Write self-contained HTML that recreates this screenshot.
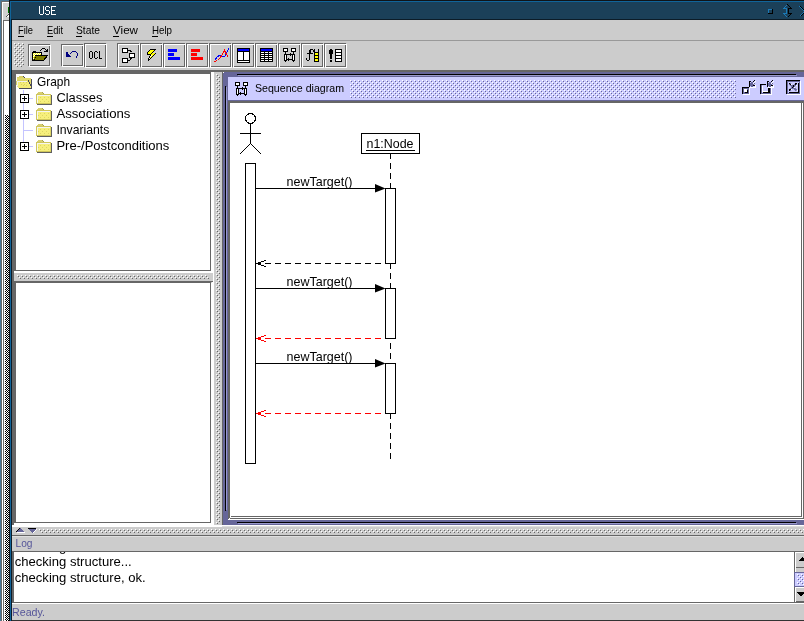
<!DOCTYPE html><html><head><meta charset="utf-8"><style>html,body{margin:0;padding:0;overflow:hidden;background:#4a7898}svg{display:block;will-change:transform}text{font-family:"Liberation Sans",sans-serif}</style></head><body><svg width="804" height="621" viewBox="0 0 804 621" shape-rendering="crispEdges"><defs>
<pattern id="chk" x="0" y="0" width="2" height="2" patternUnits="userSpaceOnUse">
<rect width="2" height="2" fill="#fff"/><rect width="1" height="1" fill="#000"/><rect x="1" y="1" width="1" height="1" fill="#000"/></pattern>
<pattern id="bump" x="0" y="0" width="4" height="4" patternUnits="userSpaceOnUse">
<rect x="0" y="0" width="1" height="1" fill="#fff"/><rect x="2" y="2" width="1" height="1" fill="#fff"/>
<rect x="1" y="1" width="1" height="1" fill="#666666"/><rect x="3" y="3" width="1" height="1" fill="#666666"/></pattern>
<pattern id="bumpP" x="2" y="0" width="4" height="4" patternUnits="userSpaceOnUse">
<rect x="0" y="0" width="1" height="1" fill="#fff"/><rect x="2" y="2" width="1" height="1" fill="#fff"/>
<rect x="1" y="1" width="1" height="1" fill="#666699"/><rect x="3" y="3" width="1" height="1" fill="#666699"/></pattern>
</defs><defs><pattern id="bp0" x="14" y="43" width="4" height="4" patternUnits="userSpaceOnUse"><rect x="0" y="0" width="1" height="1" fill="#ffffff"/><rect x="2" y="2" width="1" height="1" fill="#ffffff"/><rect x="1" y="1" width="1" height="1" fill="#666666"/><rect x="3" y="3" width="1" height="1" fill="#666666"/></pattern><pattern id="bp1" x="17" y="275" width="4" height="4" patternUnits="userSpaceOnUse"><rect x="0" y="0" width="1" height="1" fill="#ffffff"/><rect x="2" y="2" width="1" height="1" fill="#ffffff"/><rect x="1" y="1" width="1" height="1" fill="#666666"/><rect x="3" y="3" width="1" height="1" fill="#666666"/></pattern><pattern id="bp2" x="216" y="74" width="4" height="4" patternUnits="userSpaceOnUse"><rect x="0" y="0" width="1" height="1" fill="#ffffff"/><rect x="2" y="2" width="1" height="1" fill="#ffffff"/><rect x="1" y="1" width="1" height="1" fill="#666666"/><rect x="3" y="3" width="1" height="1" fill="#666666"/></pattern><pattern id="bp3" x="350" y="80" width="4" height="4" patternUnits="userSpaceOnUse"><rect x="0" y="0" width="1" height="1" fill="#ffffff"/><rect x="2" y="2" width="1" height="1" fill="#ffffff"/><rect x="1" y="1" width="1" height="1" fill="#666699"/><rect x="3" y="3" width="1" height="1" fill="#666699"/></pattern><pattern id="bp4" x="39" y="529" width="4" height="4" patternUnits="userSpaceOnUse"><rect x="0" y="0" width="1" height="1" fill="#ffffff"/><rect x="2" y="2" width="1" height="1" fill="#ffffff"/><rect x="1" y="1" width="1" height="1" fill="#666666"/><rect x="3" y="3" width="1" height="1" fill="#666666"/></pattern><pattern id="bp5" x="797" y="574" width="4" height="4" patternUnits="userSpaceOnUse"><rect x="0" y="0" width="1" height="1" fill="#ffffff"/><rect x="2" y="2" width="1" height="1" fill="#ffffff"/><rect x="1" y="1" width="1" height="1" fill="#666699"/><rect x="3" y="3" width="1" height="1" fill="#666699"/></pattern></defs>
<rect x="0" y="0" width="804" height="621" fill="#4a7898"/>
<rect x="1" y="1" width="1" height="620" fill="#6a6a6a"/>
<rect x="1" y="1" width="9" height="1" fill="#6a6a6a"/>
<rect x="2" y="2" width="1" height="619" fill="#ffffff"/>
<rect x="2" y="2" width="8" height="1" fill="#ffffff"/>
<rect x="3" y="3" width="6" height="17" fill="#d0d0d0"/>
<rect x="8" y="7" width="1" height="6" fill="#007000"/>
<rect x="3" y="20" width="6" height="1" fill="#6a6a6a"/>
<rect x="3" y="20" width="1" height="601" fill="#6a6a6a"/>
<rect x="4" y="21" width="5" height="600" fill="#ffffff"/>
<rect x="6" y="16" width="1" height="1" fill="#505050"/>
<rect x="7" y="15" width="1" height="1" fill="#505050"/>
<rect x="8" y="14" width="1" height="1" fill="#505050"/>
<rect x="7" y="16" width="1" height="1" fill="#ffffff"/>
<rect x="8" y="15" width="1" height="1" fill="#ffffff"/>
<rect x="8" y="16" width="1" height="1" fill="#ffffff"/>
<rect x="5" y="115" width="4" height="506" fill="url(#chk)"/>
<rect x="9" y="0" width="1" height="621" fill="#101418"/>
<rect x="9" y="0" width="796" height="1" fill="#101418"/>
<rect x="10" y="1" width="1" height="620" fill="#10649a"/>
<rect x="10" y="1" width="795" height="1" fill="#10649a"/>
<rect x="11" y="2" width="793" height="17" fill="#1b4059"/>
<rect x="11" y="19" width="794" height="1" fill="#0c1c28"/>
<rect x="11" y="20" width="1" height="601" fill="#0c1c28"/>
<rect x="12" y="20" width="792" height="601" fill="#cccccc"/>
<rect x="39" y="6" width="1" height="8" fill="#ffffff"/>
<rect x="43" y="6" width="1" height="8" fill="#ffffff"/>
<rect x="40" y="14" width="3" height="1" fill="#ffffff"/>
<rect x="46" y="6" width="3" height="1" fill="#ffffff"/>
<rect x="49" y="7" width="1" height="1" fill="#ffffff"/>
<rect x="45" y="7" width="1" height="3" fill="#ffffff"/>
<rect x="46" y="10" width="3" height="1" fill="#ffffff"/>
<rect x="49" y="11" width="1" height="3" fill="#ffffff"/>
<rect x="46" y="14" width="3" height="1" fill="#ffffff"/>
<rect x="45" y="13" width="1" height="1" fill="#ffffff"/>
<rect x="51" y="6" width="1" height="9" fill="#ffffff"/>
<rect x="52" y="6" width="4" height="1" fill="#ffffff"/>
<rect x="52" y="10" width="3" height="1" fill="#ffffff"/>
<rect x="52" y="14" width="4" height="1" fill="#ffffff"/>
<rect x="12" y="40" width="793" height="1" fill="#999999"/>
<text x="18" y="34" font-size="11" fill="#000" textLength="15" lengthAdjust="spacingAndGlyphs">File</text>
<rect x="18" y="36" width="6" height="1" fill="#000"/>
<text x="47" y="34" font-size="11" fill="#000" textLength="16" lengthAdjust="spacingAndGlyphs">Edit</text>
<rect x="47" y="36" width="6" height="1" fill="#000"/>
<text x="76" y="34" font-size="11" fill="#000" textLength="24" lengthAdjust="spacingAndGlyphs">State</text>
<rect x="76" y="36" width="6" height="1" fill="#000"/>
<text x="113" y="34" font-size="11" fill="#000" textLength="25" lengthAdjust="spacingAndGlyphs">View</text>
<rect x="113" y="36" width="6" height="1" fill="#000"/>
<text x="152" y="34" font-size="11" fill="#000" textLength="20" lengthAdjust="spacingAndGlyphs">Help</text>
<rect x="152" y="36" width="6" height="1" fill="#000"/>
<rect x="14" y="43" width="10" height="24" fill="url(#bp0)"/>
<rect x="28" y="44" width="22" height="1" fill="#666666"/>
<rect x="28" y="44" width="1" height="22" fill="#666666"/>
<rect x="28" y="65" width="22" height="1" fill="#666666"/>
<rect x="49" y="44" width="1" height="22" fill="#666666"/>
<rect x="29" y="45" width="22" height="1" fill="#ffffff"/>
<rect x="29" y="45" width="1" height="22" fill="#ffffff"/>
<rect x="29" y="66" width="22" height="1" fill="#ffffff"/>
<rect x="50" y="45" width="1" height="22" fill="#ffffff"/>
<rect x="61" y="44" width="22" height="1" fill="#666666"/>
<rect x="61" y="44" width="1" height="22" fill="#666666"/>
<rect x="61" y="65" width="22" height="1" fill="#666666"/>
<rect x="82" y="44" width="1" height="22" fill="#666666"/>
<rect x="62" y="45" width="22" height="1" fill="#ffffff"/>
<rect x="62" y="45" width="1" height="22" fill="#ffffff"/>
<rect x="62" y="66" width="22" height="1" fill="#ffffff"/>
<rect x="83" y="45" width="1" height="22" fill="#ffffff"/>
<rect x="84" y="43" width="22" height="1" fill="#666666"/>
<rect x="84" y="43" width="1" height="24" fill="#666666"/>
<rect x="84" y="66" width="22" height="1" fill="#666666"/>
<rect x="105" y="43" width="1" height="24" fill="#666666"/>
<rect x="85" y="44" width="22" height="1" fill="#ffffff"/>
<rect x="85" y="44" width="1" height="24" fill="#ffffff"/>
<rect x="85" y="67" width="22" height="1" fill="#ffffff"/>
<rect x="106" y="44" width="1" height="24" fill="#ffffff"/>
<rect x="117" y="43" width="22" height="1" fill="#666666"/>
<rect x="117" y="43" width="1" height="24" fill="#666666"/>
<rect x="117" y="66" width="22" height="1" fill="#666666"/>
<rect x="138" y="43" width="1" height="24" fill="#666666"/>
<rect x="118" y="44" width="22" height="1" fill="#ffffff"/>
<rect x="118" y="44" width="1" height="24" fill="#ffffff"/>
<rect x="118" y="67" width="22" height="1" fill="#ffffff"/>
<rect x="139" y="44" width="1" height="24" fill="#ffffff"/>
<rect x="140" y="43" width="22" height="1" fill="#666666"/>
<rect x="140" y="43" width="1" height="24" fill="#666666"/>
<rect x="140" y="66" width="22" height="1" fill="#666666"/>
<rect x="161" y="43" width="1" height="24" fill="#666666"/>
<rect x="141" y="44" width="22" height="1" fill="#ffffff"/>
<rect x="141" y="44" width="1" height="24" fill="#ffffff"/>
<rect x="141" y="67" width="22" height="1" fill="#ffffff"/>
<rect x="162" y="44" width="1" height="24" fill="#ffffff"/>
<rect x="163" y="43" width="22" height="1" fill="#666666"/>
<rect x="163" y="43" width="1" height="24" fill="#666666"/>
<rect x="163" y="66" width="22" height="1" fill="#666666"/>
<rect x="184" y="43" width="1" height="24" fill="#666666"/>
<rect x="164" y="44" width="22" height="1" fill="#ffffff"/>
<rect x="164" y="44" width="1" height="24" fill="#ffffff"/>
<rect x="164" y="67" width="22" height="1" fill="#ffffff"/>
<rect x="185" y="44" width="1" height="24" fill="#ffffff"/>
<rect x="186" y="43" width="22" height="1" fill="#666666"/>
<rect x="186" y="43" width="1" height="24" fill="#666666"/>
<rect x="186" y="66" width="22" height="1" fill="#666666"/>
<rect x="207" y="43" width="1" height="24" fill="#666666"/>
<rect x="187" y="44" width="22" height="1" fill="#ffffff"/>
<rect x="187" y="44" width="1" height="24" fill="#ffffff"/>
<rect x="187" y="67" width="22" height="1" fill="#ffffff"/>
<rect x="208" y="44" width="1" height="24" fill="#ffffff"/>
<rect x="209" y="43" width="22" height="1" fill="#666666"/>
<rect x="209" y="43" width="1" height="24" fill="#666666"/>
<rect x="209" y="66" width="22" height="1" fill="#666666"/>
<rect x="230" y="43" width="1" height="24" fill="#666666"/>
<rect x="210" y="44" width="22" height="1" fill="#ffffff"/>
<rect x="210" y="44" width="1" height="24" fill="#ffffff"/>
<rect x="210" y="67" width="22" height="1" fill="#ffffff"/>
<rect x="231" y="44" width="1" height="24" fill="#ffffff"/>
<rect x="232" y="43" width="22" height="1" fill="#666666"/>
<rect x="232" y="43" width="1" height="24" fill="#666666"/>
<rect x="232" y="66" width="22" height="1" fill="#666666"/>
<rect x="253" y="43" width="1" height="24" fill="#666666"/>
<rect x="233" y="44" width="22" height="1" fill="#ffffff"/>
<rect x="233" y="44" width="1" height="24" fill="#ffffff"/>
<rect x="233" y="67" width="22" height="1" fill="#ffffff"/>
<rect x="254" y="44" width="1" height="24" fill="#ffffff"/>
<rect x="255" y="43" width="22" height="1" fill="#666666"/>
<rect x="255" y="43" width="1" height="24" fill="#666666"/>
<rect x="255" y="66" width="22" height="1" fill="#666666"/>
<rect x="276" y="43" width="1" height="24" fill="#666666"/>
<rect x="256" y="44" width="22" height="1" fill="#ffffff"/>
<rect x="256" y="44" width="1" height="24" fill="#ffffff"/>
<rect x="256" y="67" width="22" height="1" fill="#ffffff"/>
<rect x="277" y="44" width="1" height="24" fill="#ffffff"/>
<rect x="278" y="43" width="22" height="1" fill="#666666"/>
<rect x="278" y="43" width="1" height="24" fill="#666666"/>
<rect x="278" y="66" width="22" height="1" fill="#666666"/>
<rect x="299" y="43" width="1" height="24" fill="#666666"/>
<rect x="279" y="44" width="22" height="1" fill="#ffffff"/>
<rect x="279" y="44" width="1" height="24" fill="#ffffff"/>
<rect x="279" y="67" width="22" height="1" fill="#ffffff"/>
<rect x="300" y="44" width="1" height="24" fill="#ffffff"/>
<rect x="301" y="43" width="22" height="1" fill="#666666"/>
<rect x="301" y="43" width="1" height="24" fill="#666666"/>
<rect x="301" y="66" width="22" height="1" fill="#666666"/>
<rect x="322" y="43" width="1" height="24" fill="#666666"/>
<rect x="302" y="44" width="22" height="1" fill="#ffffff"/>
<rect x="302" y="44" width="1" height="24" fill="#ffffff"/>
<rect x="302" y="67" width="22" height="1" fill="#ffffff"/>
<rect x="323" y="44" width="1" height="24" fill="#ffffff"/>
<rect x="324" y="43" width="22" height="1" fill="#666666"/>
<rect x="324" y="43" width="1" height="24" fill="#666666"/>
<rect x="324" y="66" width="22" height="1" fill="#666666"/>
<rect x="345" y="43" width="1" height="24" fill="#666666"/>
<rect x="325" y="44" width="22" height="1" fill="#ffffff"/>
<rect x="325" y="44" width="1" height="24" fill="#ffffff"/>
<rect x="325" y="67" width="22" height="1" fill="#ffffff"/>
<rect x="346" y="44" width="1" height="24" fill="#ffffff"/>
<rect x="12" y="70" width="792" height="2" fill="#666666"/>
<rect x="12" y="72" width="4" height="454" fill="#666666"/>
<rect x="14" y="72" width="197" height="1" fill="#666666"/>
<rect x="14" y="73" width="197" height="1" fill="#666666"/>
<rect x="16" y="74" width="194" height="196" fill="#ffffff"/>
<rect x="210" y="72" width="1" height="199" fill="#666666"/>
<rect x="16" y="270" width="195" height="1" fill="#666666"/>
<rect x="211" y="72" width="1" height="200" fill="#ffffff"/>
<rect x="14" y="271" width="198" height="1" fill="#ffffff"/>
<rect x="212" y="72" width="2" height="454" fill="#ffffff"/>
<rect x="14" y="272" width="200" height="1" fill="#ffffff"/>
<rect x="14" y="273" width="199" height="8" fill="#cccccc"/>
<rect x="17" y="275" width="192" height="4" fill="url(#bp1)"/>
<rect x="14" y="281" width="199" height="1" fill="#666666"/>
<rect x="14" y="282" width="197" height="1" fill="#666666"/>
<rect x="16" y="283" width="194" height="239" fill="#ffffff"/>
<rect x="210" y="282" width="1" height="241" fill="#666666"/>
<rect x="16" y="522" width="195" height="1" fill="#666666"/>
<rect x="211" y="283" width="1" height="241" fill="#ffffff"/>
<rect x="14" y="523" width="198" height="1" fill="#ffffff"/>
<rect x="14" y="524" width="198" height="1" fill="#ffffff"/>
<rect x="214" y="72" width="8" height="453" fill="#cccccc"/>
<rect x="216" y="74" width="4" height="450" fill="url(#bp2)"/>
<rect x="222" y="72" width="1" height="453" fill="#666666"/>
<rect x="223" y="72" width="581" height="453" fill="#666699"/>
<rect x="223" y="72" width="1" height="1" fill="#ffffff"/>
<rect x="237" y="74" width="559" height="1" fill="#000"/>
<rect x="225" y="86" width="1" height="425" fill="#000"/>
<rect x="237" y="522" width="559" height="1" fill="#000"/>
<rect x="238" y="75" width="559" height="1" fill="#9999cc"/>
<rect x="226" y="87" width="1" height="423" fill="#9999cc"/>
<rect x="238" y="523" width="559" height="1" fill="#9999cc"/>
<rect x="228" y="77" width="576" height="23" fill="#ccccff"/>
<rect x="228" y="100" width="577" height="1" fill="#666699"/>
<rect x="350" y="80" width="386" height="18" fill="url(#bp3)"/>
<text x="255" y="92" font-size="11" fill="#000" textLength="89" lengthAdjust="spacingAndGlyphs">Sequence diagram</text>
<rect x="228" y="101" width="576" height="419" fill="#ffffff"/>
<rect x="228" y="101" width="576" height="1" fill="#666666"/>
<rect x="228" y="102" width="575" height="1" fill="#666666"/>
<rect x="228" y="101" width="1" height="418" fill="#666666"/>
<rect x="229" y="101" width="1" height="417" fill="#666666"/>
<rect x="231" y="516" width="571" height="1" fill="#666666"/>
<rect x="801" y="103" width="1" height="414" fill="#666666"/>
<rect x="230" y="518" width="574" height="1" fill="#666666"/>
<rect x="803" y="101" width="1" height="418" fill="#666666"/>
<rect x="12" y="525" width="793" height="1" fill="#ffffff"/>
<rect x="12" y="526" width="792" height="9" fill="#cccccc"/>
<rect x="12" y="526" width="210" height="1" fill="#ffffff"/>
<rect x="222" y="526" width="583" height="1" fill="#dedede"/>
<rect x="39" y="529" width="765" height="4" fill="url(#bp4)"/>
<rect x="12" y="535" width="793" height="1" fill="#666666"/>
<rect x="12" y="536" width="793" height="1" fill="#e0e0e0"/>
<text x="15.5" y="547" font-size="11" fill="#555599" textLength="17" lengthAdjust="spacingAndGlyphs">Log</text>
<rect x="12" y="551" width="793" height="1" fill="#666666"/>
<rect x="14" y="552" width="781" height="50" fill="#ffffff"/>
<rect x="12" y="551" width="1" height="52" fill="#666666"/>
<rect x="13" y="551" width="1" height="51" fill="#666666"/>
<rect x="12" y="602" width="793" height="1" fill="#666666"/>
<rect x="12" y="603" width="793" height="1" fill="#ffffff"/>
<rect x="794" y="551" width="1" height="52" fill="#666666"/>
<clipPath id="logclip"><rect x="14" y="552" width="780" height="50"/></clipPath>
<g clip-path="url(#logclip)">
<text x="14.7" y="551" font-size="13" fill="#000" textLength="117" lengthAdjust="spacingAndGlyphs">checking structure...</text>
</g>
<text x="14.7" y="566" font-size="13" fill="#000" textLength="117" lengthAdjust="spacingAndGlyphs">checking structure...</text>
<text x="14.7" y="582" font-size="13" fill="#000" textLength="131" lengthAdjust="spacingAndGlyphs">checking structure, ok.</text>
<text x="12" y="616" font-size="11" fill="#555599" textLength="33" lengthAdjust="spacingAndGlyphs">Ready.</text>
<rect x="12" y="620" width="793" height="1" fill="#333333"/>
<g fill="none" stroke="#000" stroke-width="1" shape-rendering="crispEdges">
<circle cx="250.5" cy="118.5" r="5"/>
<path d="M250.5 123.5V143.5M240 133.5H261" />
<path d="M250.5 143.5L239.8 154.2M250.5 143.5L261.2 154.2"/>
<rect x="245.5" y="163.5" width="10" height="300" fill="#fff"/>
<rect x="361.5" y="133.5" width="58" height="20" fill="#fff"/>
<path d="M390.5 153V459" stroke-dasharray="6 4"/>
</g>
<text x="366.5" y="148" font-size="13" fill="#000" textLength="47" lengthAdjust="spacingAndGlyphs">n1:Node</text>
<rect x="366" y="150" width="49" height="1" fill="#000"/>
<text x="286.5" y="186" font-size="13" fill="#000" textLength="66" lengthAdjust="spacingAndGlyphs">newTarget()</text>
<rect x="256" y="188" width="120" height="1" fill="#000"/>
<path d="M375 184L385.5 188.5L375 192.5Z" fill="#000" shape-rendering="geometricPrecision"/>
<rect x="385.5" y="188.5" width="10" height="75" fill="#fff" stroke="#000"/>
<path d="M256 263.5H385" stroke="#000" stroke-dasharray="6 4" stroke-dashoffset="1" fill="none"/>
<rect x="258" y="262" width="1" height="1" fill="#000"/>
<rect x="259" y="262" width="1" height="1" fill="#000"/>
<rect x="258" y="264" width="1" height="1" fill="#000"/>
<rect x="259" y="264" width="1" height="1" fill="#000"/>
<rect x="260" y="262" width="1" height="1" fill="#000"/>
<rect x="261" y="261" width="1" height="1" fill="#000"/>
<rect x="262" y="261" width="1" height="1" fill="#000"/>
<rect x="263" y="261" width="1" height="1" fill="#000"/>
<rect x="264" y="260" width="1" height="1" fill="#000"/>
<rect x="265" y="260" width="1" height="1" fill="#000"/>
<rect x="260" y="264" width="1" height="1" fill="#000"/>
<rect x="261" y="265" width="1" height="1" fill="#000"/>
<rect x="262" y="265" width="1" height="1" fill="#000"/>
<rect x="263" y="265" width="1" height="1" fill="#000"/>
<rect x="264" y="266" width="1" height="1" fill="#000"/>
<rect x="265" y="266" width="1" height="1" fill="#000"/>
<text x="286.5" y="286" font-size="13" fill="#000" textLength="66" lengthAdjust="spacingAndGlyphs">newTarget()</text>
<rect x="256" y="288" width="120" height="1" fill="#000"/>
<path d="M375 284L385.5 288.5L375 292.5Z" fill="#000" shape-rendering="geometricPrecision"/>
<rect x="385.5" y="288.5" width="10" height="50" fill="#fff" stroke="#000"/>
<path d="M256 338.5H385" stroke="#ff0000" stroke-dasharray="6 4" stroke-dashoffset="1" fill="none"/>
<rect x="258" y="337" width="1" height="1" fill="#ff0000"/>
<rect x="259" y="337" width="1" height="1" fill="#ff0000"/>
<rect x="258" y="339" width="1" height="1" fill="#ff0000"/>
<rect x="259" y="339" width="1" height="1" fill="#ff0000"/>
<rect x="260" y="337" width="1" height="1" fill="#ff0000"/>
<rect x="261" y="336" width="1" height="1" fill="#ff0000"/>
<rect x="262" y="336" width="1" height="1" fill="#ff0000"/>
<rect x="263" y="336" width="1" height="1" fill="#ff0000"/>
<rect x="264" y="335" width="1" height="1" fill="#ff0000"/>
<rect x="265" y="335" width="1" height="1" fill="#ff0000"/>
<rect x="260" y="339" width="1" height="1" fill="#ff0000"/>
<rect x="261" y="340" width="1" height="1" fill="#ff0000"/>
<rect x="262" y="340" width="1" height="1" fill="#ff0000"/>
<rect x="263" y="340" width="1" height="1" fill="#ff0000"/>
<rect x="264" y="341" width="1" height="1" fill="#ff0000"/>
<rect x="265" y="341" width="1" height="1" fill="#ff0000"/>
<text x="286.5" y="361" font-size="13" fill="#000" textLength="66" lengthAdjust="spacingAndGlyphs">newTarget()</text>
<rect x="256" y="363" width="120" height="1" fill="#000"/>
<path d="M375 359L385.5 363.5L375 367.5Z" fill="#000" shape-rendering="geometricPrecision"/>
<rect x="385.5" y="363.5" width="10" height="50" fill="#fff" stroke="#000"/>
<path d="M256 413.5H385" stroke="#ff0000" stroke-dasharray="6 4" stroke-dashoffset="1" fill="none"/>
<rect x="258" y="412" width="1" height="1" fill="#ff0000"/>
<rect x="259" y="412" width="1" height="1" fill="#ff0000"/>
<rect x="258" y="414" width="1" height="1" fill="#ff0000"/>
<rect x="259" y="414" width="1" height="1" fill="#ff0000"/>
<rect x="260" y="412" width="1" height="1" fill="#ff0000"/>
<rect x="261" y="411" width="1" height="1" fill="#ff0000"/>
<rect x="262" y="411" width="1" height="1" fill="#ff0000"/>
<rect x="263" y="411" width="1" height="1" fill="#ff0000"/>
<rect x="264" y="410" width="1" height="1" fill="#ff0000"/>
<rect x="265" y="410" width="1" height="1" fill="#ff0000"/>
<rect x="260" y="414" width="1" height="1" fill="#ff0000"/>
<rect x="261" y="415" width="1" height="1" fill="#ff0000"/>
<rect x="262" y="415" width="1" height="1" fill="#ff0000"/>
<rect x="263" y="415" width="1" height="1" fill="#ff0000"/>
<rect x="264" y="416" width="1" height="1" fill="#ff0000"/>
<rect x="265" y="416" width="1" height="1" fill="#ff0000"/>
<rect x="19" y="76" width="4" height="1" fill="#d8d068"/>
<rect x="23" y="76" width="1" height="1" fill="#4a4a58"/>
<rect x="17" y="77" width="7" height="1" fill="#d8d068"/>
<rect x="24" y="77" width="1" height="1" fill="#4a4a58"/>
<rect x="17" y="78" width="14" height="2" fill="#e2da6c"/>
<rect x="31" y="79" width="1" height="10" fill="#4a4a58"/>
<rect x="17" y="80" width="11" height="1" fill="#dcd468"/>
<rect x="28" y="80" width="1" height="1" fill="#4a4a58"/>
<rect x="29" y="80" width="2" height="1" fill="#e2da6c"/>
<rect x="16" y="81" width="1" height="4" fill="#d8d068"/>
<rect x="17" y="81" width="10" height="1" fill="#f0f0f0"/>
<rect x="27" y="81" width="1" height="1" fill="#f4ec78"/>
<rect x="28" y="81" width="1" height="1" fill="#4a4a58"/>
<rect x="29" y="81" width="2" height="1" fill="#e2da6c"/>
<rect x="17" y="82" width="1" height="4" fill="#f0f0f0"/>
<rect x="18" y="82" width="11" height="6" fill="#f4ec78"/>
<rect x="29" y="82" width="1" height="1" fill="#4a4a58"/>
<rect x="29" y="83" width="1" height="1" fill="#4a4a58"/>
<rect x="30" y="82" width="1" height="1" fill="#e2da6c"/>
<rect x="30" y="83" width="1" height="1" fill="#e2da6c"/>
<rect x="29" y="84" width="1" height="1" fill="#f4ec78"/>
<rect x="30" y="84" width="1" height="1" fill="#4a4a58"/>
<rect x="29" y="85" width="1" height="1" fill="#f4ec78"/>
<rect x="30" y="85" width="1" height="1" fill="#4a4a58"/>
<rect x="18" y="86" width="13" height="1" fill="#f4ec78"/>
<rect x="18" y="87" width="13" height="1" fill="#f4ec78"/>
<rect x="17" y="86" width="1" height="1" fill="#e8e0a0"/>
<rect x="19" y="88" width="13" height="1" fill="#4a4a58"/>
<rect x="21" y="84" width="1" height="1" fill="#d8d060"/>
<rect x="24" y="84" width="1" height="1" fill="#d8d060"/>
<rect x="23" y="85" width="1" height="1" fill="#d8d060"/>
<rect x="26" y="85" width="1" height="1" fill="#d8d060"/>
<rect x="20" y="82" width="1" height="1" fill="#d8d060"/>
<rect x="23" y="82" width="1" height="1" fill="#d8d060"/>
<rect x="26" y="82" width="1" height="1" fill="#d8d060"/>
<text x="37" y="86" font-size="13" fill="#000" textLength="33" lengthAdjust="spacingAndGlyphs">Graph</text>
<rect x="23" y="90" width="1" height="57" fill="#c4c4ff"/>
<rect x="24" y="98" width="9" height="1" fill="#c4c4ff"/>
<rect x="20" y="94" width="9" height="9" fill="#000"/>
<rect x="21" y="95" width="7" height="7" fill="#ffffff"/>
<rect x="22" y="98" width="5" height="1" fill="#000"/>
<rect x="24" y="96" width="1" height="5" fill="#000"/>
<rect x="38" y="92" width="5" height="1" fill="#d8d070"/>
<rect x="42" y="92" width="1" height="1" fill="#a8a050"/>
<rect x="37" y="93" width="7" height="1" fill="#d8d070"/>
<rect x="43" y="93" width="1" height="1" fill="#a8a050"/>
<rect x="36" y="94" width="15" height="1" fill="#cfc65c"/>
<rect x="36" y="95" width="1" height="9" fill="#cfc65c"/>
<rect x="37" y="95" width="13" height="1" fill="#f4f4f4"/>
<rect x="37" y="96" width="1" height="7" fill="#f4f4f4"/>
<rect x="38" y="96" width="12" height="7" fill="#f6ef7c"/>
<rect x="50" y="95" width="1" height="8" fill="#e0d868"/>
<rect x="36" y="103" width="15" height="1" fill="#cfc65c"/>
<rect x="51" y="95" width="1" height="10" fill="#606060"/>
<rect x="37" y="104" width="15" height="1" fill="#606060"/>
<rect x="40" y="97" width="1" height="1" fill="#ddd565"/>
<rect x="44" y="97" width="1" height="1" fill="#ddd565"/>
<rect x="48" y="97" width="1" height="1" fill="#ddd565"/>
<rect x="38" y="99" width="1" height="1" fill="#ddd565"/>
<rect x="42" y="99" width="1" height="1" fill="#ddd565"/>
<rect x="46" y="99" width="1" height="1" fill="#ddd565"/>
<rect x="40" y="101" width="1" height="1" fill="#ddd565"/>
<rect x="44" y="101" width="1" height="1" fill="#ddd565"/>
<rect x="48" y="101" width="1" height="1" fill="#ddd565"/>
<text x="56.4" y="102" font-size="13" fill="#000" textLength="46" lengthAdjust="spacingAndGlyphs">Classes</text>
<rect x="24" y="114" width="9" height="1" fill="#c4c4ff"/>
<rect x="20" y="110" width="9" height="9" fill="#000"/>
<rect x="21" y="111" width="7" height="7" fill="#ffffff"/>
<rect x="22" y="114" width="5" height="1" fill="#000"/>
<rect x="24" y="112" width="1" height="5" fill="#000"/>
<rect x="38" y="108" width="5" height="1" fill="#d8d070"/>
<rect x="42" y="108" width="1" height="1" fill="#a8a050"/>
<rect x="37" y="109" width="7" height="1" fill="#d8d070"/>
<rect x="43" y="109" width="1" height="1" fill="#a8a050"/>
<rect x="36" y="110" width="15" height="1" fill="#cfc65c"/>
<rect x="36" y="111" width="1" height="9" fill="#cfc65c"/>
<rect x="37" y="111" width="13" height="1" fill="#f4f4f4"/>
<rect x="37" y="112" width="1" height="7" fill="#f4f4f4"/>
<rect x="38" y="112" width="12" height="7" fill="#f6ef7c"/>
<rect x="50" y="111" width="1" height="8" fill="#e0d868"/>
<rect x="36" y="119" width="15" height="1" fill="#cfc65c"/>
<rect x="51" y="111" width="1" height="10" fill="#606060"/>
<rect x="37" y="120" width="15" height="1" fill="#606060"/>
<rect x="40" y="113" width="1" height="1" fill="#ddd565"/>
<rect x="44" y="113" width="1" height="1" fill="#ddd565"/>
<rect x="48" y="113" width="1" height="1" fill="#ddd565"/>
<rect x="38" y="115" width="1" height="1" fill="#ddd565"/>
<rect x="42" y="115" width="1" height="1" fill="#ddd565"/>
<rect x="46" y="115" width="1" height="1" fill="#ddd565"/>
<rect x="40" y="117" width="1" height="1" fill="#ddd565"/>
<rect x="44" y="117" width="1" height="1" fill="#ddd565"/>
<rect x="48" y="117" width="1" height="1" fill="#ddd565"/>
<text x="56.4" y="118" font-size="13" fill="#000" textLength="74" lengthAdjust="spacingAndGlyphs">Associations</text>
<rect x="24" y="130" width="9" height="1" fill="#c4c4ff"/>
<rect x="38" y="124" width="5" height="1" fill="#d8d070"/>
<rect x="42" y="124" width="1" height="1" fill="#a8a050"/>
<rect x="37" y="125" width="7" height="1" fill="#d8d070"/>
<rect x="43" y="125" width="1" height="1" fill="#a8a050"/>
<rect x="36" y="126" width="15" height="1" fill="#cfc65c"/>
<rect x="36" y="127" width="1" height="9" fill="#cfc65c"/>
<rect x="37" y="127" width="13" height="1" fill="#f4f4f4"/>
<rect x="37" y="128" width="1" height="7" fill="#f4f4f4"/>
<rect x="38" y="128" width="12" height="7" fill="#f6ef7c"/>
<rect x="50" y="127" width="1" height="8" fill="#e0d868"/>
<rect x="36" y="135" width="15" height="1" fill="#cfc65c"/>
<rect x="51" y="127" width="1" height="10" fill="#606060"/>
<rect x="37" y="136" width="15" height="1" fill="#606060"/>
<rect x="40" y="129" width="1" height="1" fill="#ddd565"/>
<rect x="44" y="129" width="1" height="1" fill="#ddd565"/>
<rect x="48" y="129" width="1" height="1" fill="#ddd565"/>
<rect x="38" y="131" width="1" height="1" fill="#ddd565"/>
<rect x="42" y="131" width="1" height="1" fill="#ddd565"/>
<rect x="46" y="131" width="1" height="1" fill="#ddd565"/>
<rect x="40" y="133" width="1" height="1" fill="#ddd565"/>
<rect x="44" y="133" width="1" height="1" fill="#ddd565"/>
<rect x="48" y="133" width="1" height="1" fill="#ddd565"/>
<text x="56.4" y="134" font-size="13" fill="#000" textLength="53" lengthAdjust="spacingAndGlyphs">Invariants</text>
<rect x="24" y="146" width="9" height="1" fill="#c4c4ff"/>
<rect x="20" y="142" width="9" height="9" fill="#000"/>
<rect x="21" y="143" width="7" height="7" fill="#ffffff"/>
<rect x="22" y="146" width="5" height="1" fill="#000"/>
<rect x="24" y="144" width="1" height="5" fill="#000"/>
<rect x="38" y="140" width="5" height="1" fill="#d8d070"/>
<rect x="42" y="140" width="1" height="1" fill="#a8a050"/>
<rect x="37" y="141" width="7" height="1" fill="#d8d070"/>
<rect x="43" y="141" width="1" height="1" fill="#a8a050"/>
<rect x="36" y="142" width="15" height="1" fill="#cfc65c"/>
<rect x="36" y="143" width="1" height="9" fill="#cfc65c"/>
<rect x="37" y="143" width="13" height="1" fill="#f4f4f4"/>
<rect x="37" y="144" width="1" height="7" fill="#f4f4f4"/>
<rect x="38" y="144" width="12" height="7" fill="#f6ef7c"/>
<rect x="50" y="143" width="1" height="8" fill="#e0d868"/>
<rect x="36" y="151" width="15" height="1" fill="#cfc65c"/>
<rect x="51" y="143" width="1" height="10" fill="#606060"/>
<rect x="37" y="152" width="15" height="1" fill="#606060"/>
<rect x="40" y="145" width="1" height="1" fill="#ddd565"/>
<rect x="44" y="145" width="1" height="1" fill="#ddd565"/>
<rect x="48" y="145" width="1" height="1" fill="#ddd565"/>
<rect x="38" y="147" width="1" height="1" fill="#ddd565"/>
<rect x="42" y="147" width="1" height="1" fill="#ddd565"/>
<rect x="46" y="147" width="1" height="1" fill="#ddd565"/>
<rect x="40" y="149" width="1" height="1" fill="#ddd565"/>
<rect x="44" y="149" width="1" height="1" fill="#ddd565"/>
<rect x="48" y="149" width="1" height="1" fill="#ddd565"/>
<text x="56.4" y="150" font-size="13" fill="#000" textLength="113" lengthAdjust="spacingAndGlyphs">Pre-/Postconditions</text>
<rect x="40" y="50" width="1" height="1" fill="#000"/>
<rect x="41" y="49" width="1" height="1" fill="#000"/>
<rect x="42" y="48" width="3" height="1" fill="#000"/>
<rect x="45" y="49" width="1" height="1" fill="#000"/>
<rect x="47" y="49" width="1" height="1" fill="#000"/>
<rect x="46" y="50" width="2" height="1" fill="#000"/>
<rect x="44" y="51" width="4" height="1" fill="#000"/>
<rect x="33" y="51" width="3" height="1" fill="#000"/>
<rect x="32" y="52" width="1" height="9" fill="#000"/>
<rect x="33" y="52" width="9" height="1" fill="#000"/>
<rect x="41" y="53" width="1" height="2" fill="#000"/>
<rect x="33" y="53" width="8" height="2" fill="#ffff00"/>
<rect x="33" y="55" width="2" height="5" fill="#ffff00"/>
<rect x="34" y="53" width="1" height="1" fill="#ffffff"/>
<rect x="36" y="53" width="1" height="1" fill="#ffffff"/>
<rect x="38" y="53" width="1" height="1" fill="#ffffff"/>
<rect x="40" y="53" width="1" height="1" fill="#ffffff"/>
<rect x="33" y="54" width="1" height="1" fill="#ffffff"/>
<rect x="35" y="54" width="1" height="1" fill="#ffffff"/>
<rect x="37" y="54" width="1" height="1" fill="#ffffff"/>
<rect x="39" y="54" width="1" height="1" fill="#ffffff"/>
<rect x="34" y="55" width="1" height="1" fill="#ffffff"/>
<rect x="33" y="56" width="1" height="1" fill="#ffffff"/>
<rect x="34" y="57" width="1" height="1" fill="#ffffff"/>
<rect x="33" y="58" width="1" height="1" fill="#ffffff"/>
<rect x="34" y="59" width="1" height="1" fill="#ffffff"/>
<rect x="35" y="55" width="13" height="1" fill="#000"/>
<path d="M35 56 H47 L43 60 H33 Z" fill="#808000"/>
<path d="M47.5 55.5 L43.5 60.5" stroke="#000" fill="none"/>
<rect x="33" y="60" width="11" height="1" fill="#000"/>
<rect x="34" y="59" width="1" height="1" fill="#000"/>
<rect x="35" y="57" width="1" height="1" fill="#000"/>
<path d="M66 52 L66 57 L71 57 Z" fill="#000080"/>
<rect x="66" y="52" width="2" height="1" fill="#000080"/>
<path d="M69.5 54.5 L71.5 52.5 L72.5 51.5 H75.5 L77.5 53.5 V55.5 L76.5 56.5 V57.5" fill="none" stroke="#000080"/>
<rect x="89" y="52" width="1" height="6" fill="#000"/>
<rect x="92" y="52" width="1" height="6" fill="#000"/>
<rect x="90" y="51" width="2" height="1" fill="#000"/>
<rect x="90" y="58" width="2" height="1" fill="#000"/>
<rect x="94" y="52" width="1" height="6" fill="#000"/>
<rect x="95" y="51" width="2" height="1" fill="#000"/>
<rect x="95" y="58" width="2" height="1" fill="#000"/>
<rect x="97" y="52" width="1" height="1" fill="#000"/>
<rect x="97" y="57" width="1" height="1" fill="#000"/>
<rect x="99" y="51" width="1" height="8" fill="#000"/>
<rect x="100" y="58" width="2" height="1" fill="#000"/>
<rect x="122" y="48" width="6" height="5" fill="#000"/>
<rect x="123" y="49" width="4" height="3" fill="#ffffff"/>
<rect x="129" y="53" width="6" height="5" fill="#000"/>
<rect x="130" y="54" width="4" height="3" fill="#ffffff"/>
<rect x="122" y="58" width="6" height="5" fill="#000"/>
<rect x="123" y="59" width="4" height="3" fill="#ffffff"/>
<path d="M128 50.5 H130.5 L131.5 52.5 M128 60.5 H129.5 L131.5 58" fill="none" stroke="#000"/>
<rect x="150" y="49" width="6" height="1" fill="#000"/>
<rect x="149" y="50" width="1" height="1" fill="#000"/>
<rect x="150" y="50" width="4" height="1" fill="#ffff00"/>
<rect x="154" y="50" width="1" height="1" fill="#000"/>
<rect x="148" y="51" width="1" height="1" fill="#000"/>
<rect x="149" y="51" width="4" height="1" fill="#ffff00"/>
<rect x="153" y="51" width="1" height="1" fill="#000"/>
<rect x="147" y="52" width="1" height="1" fill="#000"/>
<rect x="148" y="52" width="4" height="1" fill="#ffff00"/>
<rect x="152" y="52" width="1" height="1" fill="#000"/>
<rect x="147" y="53" width="1" height="1" fill="#000"/>
<rect x="148" y="53" width="3" height="1" fill="#ffff00"/>
<rect x="151" y="53" width="1" height="1" fill="#000"/>
<rect x="152" y="53" width="3" height="1" fill="#ffff00"/>
<rect x="155" y="53" width="1" height="1" fill="#000"/>
<rect x="147" y="54" width="4" height="1" fill="#000"/>
<rect x="151" y="54" width="3" height="1" fill="#ffff00"/>
<rect x="154" y="54" width="1" height="1" fill="#000"/>
<rect x="150" y="55" width="1" height="1" fill="#000"/>
<rect x="151" y="55" width="2" height="1" fill="#ffff00"/>
<rect x="153" y="55" width="1" height="1" fill="#000"/>
<rect x="149" y="56" width="1" height="1" fill="#000"/>
<rect x="150" y="56" width="2" height="1" fill="#ffff00"/>
<rect x="152" y="56" width="1" height="1" fill="#000"/>
<rect x="149" y="57" width="1" height="1" fill="#000"/>
<rect x="150" y="57" width="1" height="1" fill="#ffff00"/>
<rect x="151" y="57" width="1" height="1" fill="#000"/>
<rect x="148" y="58" width="1" height="1" fill="#000"/>
<rect x="149" y="58" width="1" height="1" fill="#ffff00"/>
<rect x="150" y="58" width="1" height="1" fill="#000"/>
<rect x="148" y="59" width="2" height="1" fill="#000"/>
<rect x="148" y="60" width="1" height="1" fill="#000"/>
<rect x="150" y="56" width="1" height="1" fill="#ffffff"/>
<rect x="149" y="58" width="1" height="1" fill="#ffffff"/>
<rect x="151" y="55" width="1" height="1" fill="#ffffff"/>
<rect x="168" y="49" width="9" height="3" fill="#0000ff"/>
<rect x="168" y="53" width="6" height="3" fill="#0000ff"/>
<rect x="168" y="57" width="12" height="3" fill="#0000ff"/>
<rect x="191" y="49" width="9" height="3" fill="#ff0000"/>
<rect x="191" y="53" width="6" height="3" fill="#ff0000"/>
<rect x="191" y="57" width="12" height="3" fill="#ff0000"/>
<path d="M214.5 60.5 L217.5 56.5 L219.5 55.5 H221.5 L222.5 56.5 H224.5 L226.5 53.5 L228.5 48.5" fill="none" stroke="#0000ff"/>
<path d="M214.5 61.5 L217.5 60.5 L220.5 57.5 L223.5 52.5 L224.5 50.5 L226.5 54.5 L228.5 57.5" fill="none" stroke="#ff0000"/>
<rect x="237" y="48" width="13" height="15" fill="#000"/>
<rect x="238" y="49" width="11" height="2" fill="#0000ff"/>
<rect x="238" y="52" width="5" height="8" fill="#ffffff"/>
<rect x="244" y="52" width="5" height="8" fill="#ffffff"/>
<rect x="238" y="61" width="11" height="1" fill="#ffffff"/>
<rect x="260" y="48" width="13" height="14" fill="#000"/>
<rect x="261" y="49" width="11" height="2" fill="#0000ff"/>
<rect x="261" y="52" width="3" height="1" fill="#ffffff"/>
<rect x="265" y="52" width="3" height="1" fill="#ffffff"/>
<rect x="269" y="52" width="3" height="1" fill="#ffffff"/>
<rect x="261" y="54" width="3" height="1" fill="#ffffff"/>
<rect x="265" y="54" width="3" height="1" fill="#ffffff"/>
<rect x="269" y="54" width="3" height="1" fill="#ffffff"/>
<rect x="261" y="56" width="3" height="1" fill="#ffffff"/>
<rect x="265" y="56" width="3" height="1" fill="#ffffff"/>
<rect x="269" y="56" width="3" height="1" fill="#ffffff"/>
<rect x="261" y="58" width="3" height="1" fill="#ffffff"/>
<rect x="265" y="58" width="3" height="1" fill="#ffffff"/>
<rect x="269" y="58" width="3" height="1" fill="#ffffff"/>
<rect x="261" y="60" width="3" height="1" fill="#ffffff"/>
<rect x="265" y="60" width="3" height="1" fill="#ffffff"/>
<rect x="269" y="60" width="3" height="1" fill="#ffffff"/>
<rect x="283" y="48" width="5" height="4" fill="#000"/>
<rect x="284" y="49" width="3" height="2" fill="#fff"/>
<rect x="291" y="48" width="5" height="4" fill="#000"/>
<rect x="292" y="49" width="3" height="2" fill="#fff"/>
<rect x="285" y="52" width="1" height="2" fill="#000"/>
<rect x="293" y="52" width="1" height="2" fill="#000"/>
<rect x="284" y="54" width="3" height="7" fill="#000"/>
<rect x="285" y="55" width="1" height="5" fill="#fff"/>
<rect x="285" y="61" width="1" height="1" fill="#000"/>
<rect x="292" y="54" width="3" height="7" fill="#000"/>
<rect x="293" y="55" width="1" height="5" fill="#fff"/>
<rect x="293" y="61" width="1" height="1" fill="#000"/>
<rect x="287" y="54" width="5" height="1" fill="#000"/>
<rect x="290" y="53" width="1" height="3" fill="#000"/>
<rect x="287" y="59" width="5" height="1" fill="#000"/>
<rect x="288" y="58" width="1" height="3" fill="#000"/>
<rect x="310" y="49" width="3" height="1" fill="#000"/>
<rect x="309" y="50" width="1" height="1" fill="#000"/>
<rect x="313" y="50" width="1" height="1" fill="#000"/>
<rect x="313" y="51" width="1" height="1" fill="#000"/>
<rect x="309" y="50" width="1" height="10" fill="#000"/>
<rect x="310" y="50" width="1" height="3" fill="#000"/>
<rect x="307" y="53" width="6" height="1" fill="#000"/>
<rect x="308" y="60" width="1" height="1" fill="#000"/>
<rect x="307" y="60" width="1" height="1" fill="#000"/>
<rect x="306" y="59" width="1" height="1" fill="#000"/>
<rect x="306" y="58" width="1" height="1" fill="#000"/>
<rect x="314" y="49" width="5" height="13" fill="#000"/>
<rect x="315" y="49" width="3" height="3" fill="#cccccc"/>
<rect x="315" y="53" width="3" height="2" fill="#ffff00"/>
<rect x="315" y="56" width="3" height="2" fill="#ffff00"/>
<rect x="315" y="59" width="3" height="2" fill="#ffff00"/>
<rect x="330" y="49" width="2" height="1" fill="#000"/>
<rect x="329" y="50" width="4" height="4" fill="#000"/>
<rect x="330" y="54" width="2" height="5" fill="#000"/>
<rect x="330" y="60" width="2" height="2" fill="#000"/>
<rect x="335" y="49" width="7" height="13" fill="#000"/>
<rect x="336" y="50" width="5" height="2" fill="#ffffff"/>
<rect x="336" y="53" width="5" height="2" fill="#ffffff"/>
<rect x="336" y="56" width="5" height="2" fill="#ffffff"/>
<rect x="336" y="59" width="5" height="2" fill="#ffffff"/>
<rect x="235" y="82" width="5" height="4" fill="#000"/>
<rect x="236" y="83" width="3" height="2" fill="#fff"/>
<rect x="243" y="82" width="5" height="4" fill="#000"/>
<rect x="244" y="83" width="3" height="2" fill="#fff"/>
<rect x="237" y="86" width="1" height="2" fill="#000"/>
<rect x="245" y="86" width="1" height="2" fill="#000"/>
<rect x="236" y="88" width="3" height="7" fill="#000"/>
<rect x="237" y="89" width="1" height="5" fill="#fff"/>
<rect x="237" y="95" width="1" height="1" fill="#000"/>
<rect x="244" y="88" width="3" height="7" fill="#000"/>
<rect x="245" y="89" width="1" height="5" fill="#fff"/>
<rect x="245" y="95" width="1" height="1" fill="#000"/>
<rect x="239" y="88" width="5" height="1" fill="#000"/>
<rect x="242" y="87" width="1" height="3" fill="#000"/>
<rect x="239" y="93" width="5" height="1" fill="#000"/>
<rect x="240" y="92" width="1" height="3" fill="#000"/>
<rect x="742" y="87" width="7" height="1" fill="#000"/>
<rect x="742" y="87" width="1" height="7" fill="#000"/>
<rect x="743" y="88" width="6" height="6" fill="#666699"/>
<rect x="744" y="89" width="3" height="3" fill="#fff"/>
<rect x="745" y="92" width="3" height="1" fill="#000"/>
<rect x="747" y="90" width="1" height="3" fill="#000"/>
<rect x="743" y="94" width="7" height="1" fill="#fff"/>
<rect x="749" y="88" width="1" height="7" fill="#fff"/>
<rect x="749" y="81" width="1" height="6" fill="#000"/>
<rect x="750" y="81" width="1" height="1" fill="#000"/>
<rect x="754" y="80" width="1" height="1" fill="#000"/>
<rect x="753" y="81" width="1" height="1" fill="#000"/>
<rect x="752" y="82" width="1" height="1" fill="#000"/>
<rect x="751" y="83" width="1" height="1" fill="#000"/>
<rect x="753" y="85" width="2" height="1" fill="#000"/>
<rect x="750" y="83" width="3" height="3" fill="#666699"/>
<rect x="751" y="82" width="2" height="1" fill="#666699"/>
<rect x="753" y="84" width="1" height="1" fill="#666699"/>
<rect x="755" y="81" width="1" height="1" fill="#fff"/>
<rect x="754" y="82" width="1" height="1" fill="#fff"/>
<rect x="753" y="83" width="1" height="1" fill="#fff"/>
<rect x="754" y="83" width="1" height="1" fill="#666699"/>
<rect x="750" y="87" width="6" height="1" fill="#fff"/>
<rect x="755" y="85" width="1" height="3" fill="#fff"/>
<rect x="751" y="86" width="1" height="1" fill="#666699"/>
<rect x="752" y="86" width="1" height="1" fill="#666699"/>
<rect x="760" y="84" width="6" height="1" fill="#000"/>
<rect x="760" y="84" width="1" height="10" fill="#000"/>
<rect x="761" y="85" width="1" height="9" fill="#666699"/>
<rect x="761" y="93" width="10" height="1" fill="#666699"/>
<rect x="762" y="85" width="7" height="7" fill="#ccccff"/>
<rect x="762" y="86" width="1" height="6" fill="#fff"/>
<rect x="762" y="91" width="6" height="1" fill="#fff"/>
<rect x="763" y="92" width="7" height="1" fill="#000"/>
<rect x="768" y="88" width="2" height="5" fill="#000"/>
<rect x="770" y="88" width="1" height="6" fill="#666699"/>
<rect x="761" y="94" width="11" height="1" fill="#fff"/>
<rect x="771" y="86" width="1" height="9" fill="#fff"/>
<rect x="767" y="81" width="1" height="6" fill="#000"/>
<rect x="768" y="81" width="1" height="1" fill="#000"/>
<rect x="772" y="80" width="1" height="1" fill="#000"/>
<rect x="771" y="81" width="1" height="1" fill="#000"/>
<rect x="770" y="82" width="1" height="1" fill="#000"/>
<rect x="769" y="83" width="1" height="1" fill="#000"/>
<rect x="771" y="85" width="2" height="1" fill="#000"/>
<rect x="768" y="83" width="3" height="3" fill="#666699"/>
<rect x="769" y="82" width="2" height="1" fill="#666699"/>
<rect x="771" y="84" width="1" height="1" fill="#666699"/>
<rect x="773" y="81" width="1" height="1" fill="#fff"/>
<rect x="772" y="82" width="1" height="1" fill="#fff"/>
<rect x="771" y="83" width="1" height="1" fill="#fff"/>
<rect x="772" y="83" width="1" height="1" fill="#666699"/>
<rect x="768" y="87" width="6" height="1" fill="#fff"/>
<rect x="773" y="85" width="1" height="3" fill="#fff"/>
<rect x="769" y="86" width="1" height="1" fill="#666699"/>
<rect x="770" y="86" width="1" height="1" fill="#666699"/>
<rect x="786" y="80" width="14" height="1" fill="#000"/>
<rect x="786" y="80" width="1" height="14" fill="#000"/>
<rect x="787" y="81" width="13" height="1" fill="#666699"/>
<rect x="787" y="81" width="1" height="13" fill="#666699"/>
<rect x="787" y="93" width="13" height="1" fill="#666699"/>
<rect x="799" y="81" width="1" height="13" fill="#666699"/>
<rect x="788" y="82" width="11" height="11" fill="#ccccff"/>
<rect x="789" y="92" width="10" height="1" fill="#000"/>
<rect x="798" y="83" width="1" height="10" fill="#000"/>
<rect x="787" y="94" width="14" height="1" fill="#fff"/>
<rect x="800" y="81" width="1" height="14" fill="#fff"/>
<path d="M789.5 83.5 L796.5 90.5 M796.5 83.5 L789.5 90.5" stroke="#666699" stroke-width="2" fill="none" shape-rendering="geometricPrecision"/>
<rect x="789" y="83" width="1" height="1" fill="#000"/>
<rect x="790" y="84" width="1" height="1" fill="#000"/>
<rect x="795" y="83" width="1" height="1" fill="#000"/>
<rect x="796" y="83" width="1" height="1" fill="#000"/>
<rect x="795" y="84" width="1" height="1" fill="#000"/>
<rect x="793" y="85" width="1" height="1" fill="#000"/>
<rect x="793" y="86" width="1" height="1" fill="#000"/>
<rect x="792" y="87" width="1" height="1" fill="#000"/>
<rect x="789" y="89" width="1" height="1" fill="#000"/>
<rect x="790" y="89" width="1" height="1" fill="#000"/>
<rect x="789" y="90" width="1" height="1" fill="#000"/>
<rect x="791" y="84" width="1" height="1" fill="#ffffff"/>
<rect x="796" y="85" width="1" height="1" fill="#ffffff"/>
<rect x="794" y="87" width="1" height="1" fill="#ffffff"/>
<rect x="797" y="90" width="1" height="1" fill="#ffffff"/>
<rect x="791" y="89" width="1" height="1" fill="#ffffff"/>
<rect x="768" y="9" width="5" height="5" fill="#000"/>
<rect x="768" y="9" width="4" height="4" fill="#1a7ab8"/>
<rect x="769" y="10" width="3" height="3" fill="#1b4059"/>
<path d="M787.5 4.5 L783.5 8.5 H786.5 V13.5 H783.5 L787.5 17.5" fill="none" stroke="#1a7ab8"/>
<path d="M787.5 4.5 L791.5 8.5 H788.5 V13.5 H791.5 L787.5 17.5" fill="none" stroke="#000"/>
<path d="M799.5 6.5 L804.5 11.5 M799.5 16.5 L804.5 11.5" fill="none" stroke="#1a7ab8"/>
<path d="M800.5 6.5 L805.5 11.5 M800.5 16.5 L805.5 11.5" fill="none" stroke="#000"/>
<rect x="19" y="528" width="1" height="1" fill="#000"/>
<rect x="20" y="528" width="1" height="1" fill="#666699"/>
<rect x="18" y="529" width="1" height="1" fill="#000"/>
<rect x="19" y="529" width="3" height="1" fill="#666699"/>
<rect x="17" y="530" width="1" height="1" fill="#000"/>
<rect x="18" y="530" width="5" height="1" fill="#666699"/>
<rect x="16" y="531" width="1" height="1" fill="#000"/>
<rect x="17" y="531" width="7" height="1" fill="#666699"/>
<rect x="17" y="532" width="8" height="1" fill="#ffffff"/>
<rect x="28" y="528" width="8" height="1" fill="#000"/>
<rect x="29" y="529" width="7" height="1" fill="#666699"/>
<rect x="30" y="530" width="5" height="1" fill="#666699"/>
<rect x="31" y="531" width="3" height="1" fill="#666699"/>
<rect x="32" y="532" width="1" height="1" fill="#666699"/>
<rect x="36" y="529" width="1" height="1" fill="#ffffff"/>
<rect x="35" y="530" width="1" height="1" fill="#ffffff"/>
<rect x="34" y="531" width="1" height="1" fill="#ffffff"/>
<rect x="33" y="532" width="1" height="1" fill="#ffffff"/>
<rect x="795" y="552" width="9" height="50" fill="#cccccc"/>
<rect x="795" y="552" width="1" height="50" fill="#fff"/>
<rect x="796" y="552" width="9" height="1" fill="#fff"/>
<path d="M798 561 L802 557 L806 561 Z" fill="#000"/>
<rect x="796" y="567" width="9" height="1" fill="#666666"/>
<rect x="794" y="572" width="10" height="15" fill="#666699"/>
<rect x="795" y="573" width="9" height="13" fill="#ccccff"/>
<rect x="797" y="574" width="7" height="11" fill="url(#bp5)"/>
<rect x="796" y="587" width="9" height="1" fill="#fff"/>
<path d="M797 592 H805 L801 597 Z" fill="#000"/>
<rect x="796" y="601" width="9" height="1" fill="#666666"/></svg></body></html>
